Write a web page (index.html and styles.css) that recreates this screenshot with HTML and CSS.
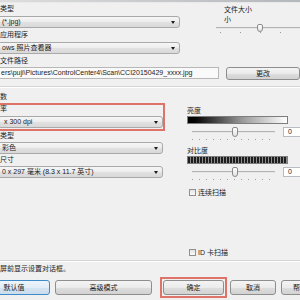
FILE: index.html
```html
<!DOCTYPE html>
<html lang="zh-CN">
<head>
  <meta charset="UTF-8" />
  <title>扫描设置</title>
  <link rel="stylesheet" href="styles.css">
</head>
<body>
  <div class="topline"></div>
  <div class="top">
    <div class="col-l">
      <div class="lbl">类型</div>
      <div class="sel">(*.jpg)</div>
      <div class="lbl">应用程序</div>
      <div class="sel">ows 照片查看器</div>
      <div class="lbl">文件路径</div>
    </div>
    <div class="col-r">
      <div class="lbl">文件大小</div>
      <div class="lbl">小</div>
      <div class="size-slider"><span class="thumb size-thumb"></span></div>
      <div class="size-ticks"></div>
    </div>
  </div>
  <div class="path-row">
    <div class="field">ers\puji\Pictures\ControlCenter4\Scan\CCI20150429_xxxx.jpg</div>
    <button class="btn change">更改</button>
  </div>
  <div class="sep"></div>

  <div class="mid">
    <div class="col-l2">
      <div class="lbl group">数</div>
      <div class="mark">
        <div class="lbl inner">率</div>
        <div class="sel">x 300 dpi</div>
      </div>
      <div class="lbl small">类型</div>
      <div class="sel">彩色</div>
      <div class="lbl small">尺寸</div>
      <div class="sel">0 x 297 毫米 (8.3 x 11.7 英寸)</div>
    </div>
    <div class="col-r2">
      <div class="lbl small first">亮度</div>
      <div class="bar bright"></div>
      <div class="srow">
        <div class="track-area"><div class="track"><span class="thumb"></span></div></div>
        <div class="num">0</div>
      </div>
      <div class="ticks"></div>
      <div class="lbl small second">对比度</div>
      <div class="bar contrast"></div>
      <div class="srow">
        <div class="track-area"><div class="track"><span class="thumb"></span></div></div>
        <div class="num">0</div>
      </div>
      <div class="ticks"></div>
      <label class="chk cont"><span class="box"></span>连续扫描</label>
      <label class="chk idcard"><span class="box"></span>ID 卡扫描</label>
    </div>
  </div>

  <div class="sep bottom"></div>
  <div class="note">屏前显示设置对话框。</div>
  <div class="btns">
    <button class="btn default">默认值</button>
    <button class="btn adv">高级模式</button>
    <div class="mark ok-mark"><button class="btn ok">确定</button></div>
    <button class="btn cancel">取消</button>
    <button class="btn help">帮</button>
  </div>
</body>
</html>
```

FILE: styles.css
```css
* { box-sizing: border-box; }
body {
  margin: 0;
  width: 300px;
  height: 300px;
  overflow: hidden;
  background: #f0f0f0;
  color: #1b1b1b;
  font: 7px/9px "Liberation Sans", "Noto Sans CJK SC", sans-serif;
}
.topline {
  height: 3px;
  background: linear-gradient(90deg, #dedede, #b4b7bb);
  border-bottom: 1px solid #e9e9e9;
}

/* top part */
.top { display: flex; }
.col-l {
  width: 186px;
  margin-left: -4px;
  padding-top: 1px;
  display: flex;
  flex-direction: column;
  gap: 2px;
}
.lbl {
  padding-left: 4px;
  height: 10px;
  line-height: 10px;
  white-space: nowrap;
}
.sel {
  position: relative;
  height: 12px;
  padding-left: 5px;
  line-height: 10px;
  white-space: nowrap;
  border: 1px solid #a9a9a9;
  border-radius: 3px;
  background: linear-gradient(#f6f6f6, #ececec 50%, #e1e1e1 51%, #d9d9d9);
}
.sel::after {
  content: "";
  position: absolute;
  right: 4px;
  top: 4px;
  border-top: 3px solid #1b1b1b;
  border-left: 2.5px solid transparent;
  border-right: 2.5px solid transparent;
}
.col-r {
  flex: 1;
  margin-left: 40px;
  padding-top: 2px;
}
.size-slider {
  position: relative;
  margin: 2px 0 0 -4px;
  height: 2px;
  border-top: 1px solid #b3b3b3;
  background: #e6e6e6;
}
.thumb {
  position: absolute;
  width: 6px;
  height: 10px;
  top: -5px;
  border: 1px solid #8b8b8b;
  border-radius: 2px 2px 3px 3px;
  background: linear-gradient(#fefefe, #e2e2e2);
}
.size-thumb { left: 41px; top: -4px; height: 8px; }
.size-ticks {
  margin: 3px 0 0 0;
  height: 1px;
  width: 80px;
  background: repeating-linear-gradient(90deg, #9a9a9a 0 1px, transparent 1px 20px);
}

/* path */
.path-row {
  display: flex;
  align-items: flex-start;
  margin-top: 1px;
}
.field {
  width: 244px;
  height: 12px;
  margin-left: -4px;
  padding-left: 4px;
  line-height: 10px;
  white-space: nowrap;
  overflow: hidden;
  border: 1px solid #b7b7b7;
  background: #f9f9f9;
}
.btn {
  height: 15px;
  padding: 0;
  font: inherit;
  color: #1b1b1b;
  border: 1px solid #8e8e8e;
  border-radius: 3px;
  background: linear-gradient(#f4f4f4, #ebebeb 50%, #dedede 51%, #d2d2d2);
  flex-shrink: 0;
}
.change { width: 74px; height: 13px; margin-left: 7px; }

.sep {
  margin-top: 6px;
  border-top: 1px solid #d4d4d4;
  border-bottom: 1px solid #fff;
}

/* settings */
.mid { display: flex; align-items: flex-start; }
.col-l2 { width: 167px; margin-left: -4px; flex-shrink: 0; }
.group { margin-top: 4px; }
.mark {
  margin: 1px -2px 0 0;
  padding-bottom: 1px;
  border: 2px solid #de7469;
}
.mark .inner { padding-left: 2px; height: 8px; line-height: 8px; }
.mark .sel { margin-top: 3px; }
.lbl.small { height: 9px; line-height: 9px; }
.col-l2 .lbl.small + .sel { margin-top: 2px; }
.col-l2 .sel + .lbl.small { margin-top: 1px; }

.col-r2 { flex: 1; margin-left: 24px; }
.col-r2 .lbl { padding-left: 0; }
.first { margin-top: 18px; }
.second { margin-top: 6px; }
.bar {
  width: 101px;
  height: 8px;
  margin-top: 1px;
  border: 1px solid #7d7d7d;
}
.bright { background: linear-gradient(90deg, #000, #050505 8%, #9a9a9a 55%, #fff); }
.contrast { background: repeating-linear-gradient(90deg, #1e1e1e 0 2px, #8c8c8c 2px 3px); }
.srow {
  display: flex;
  margin-top: 3px;
  height: 10px;
}
.track-area { width: 96px; padding: 4px 8px 0 5px; }
.track {
  position: relative;
  height: 2px;
  border-top: 1px solid #b3b3b3;
  background: #e6e6e6;
}
.track .thumb { left: 40px; }
.num {
  width: 22px;
  height: 10px;
  padding-left: 4px;
  line-height: 8px;
  border: 1px solid #b8bbc1;
  background: #fff;
}
.ticks {
  margin: 2px 0 0 5px;
  width: 84px;
  height: 1px;
  background: repeating-linear-gradient(90deg, #a0a0a0 0 1px, transparent 1px 7px);
}
.chk {
  display: flex;
  align-items: center;
  gap: 2px;
  height: 9px;
  padding-left: 2px;
  white-space: nowrap;
}
.cont { margin-top: 8px; }
.idcard { margin-top: 51px; }
.box {
  width: 7px;
  height: 7px;
  border: 1px solid #909090;
  background: linear-gradient(#e4e4e4, #fafafa);
}

.sep.bottom { margin-top: 3px; }
.note {
  margin-top: 2px;
  height: 10px;
  line-height: 10px;
  white-space: nowrap;
}
.btns {
  display: flex;
  align-items: center;
  margin-top: 3px;
}
.default {
  width: 72px;
  margin-left: -22px;
  border-color: #3f8bc8;
  background: linear-gradient(#eef5fb, #e2edf7 50%, #d4e4f2 51%, #cbdcec);
}
.adv { width: 97px; margin-left: 5px; }
.ok-mark { margin: 0 0 0 8px; padding: 1px; }
.ok { width: 61px; display: block; }
.cancel { width: 46px; margin-left: 3px; }
.help { width: 46px; margin-left: 5px; text-align: left; padding-left: 11px; }
```
